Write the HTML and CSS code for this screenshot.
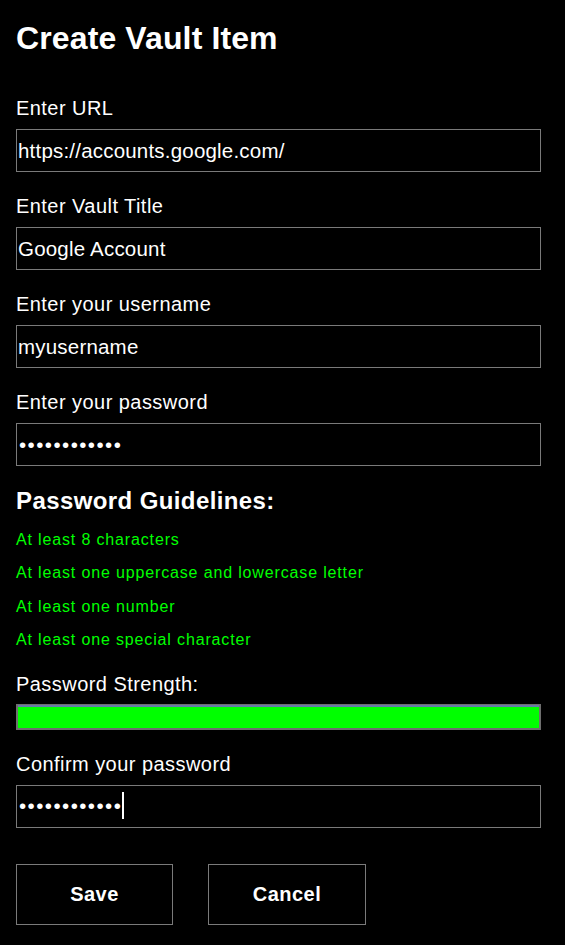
FILE: index.html
```html
<!DOCTYPE html>
<html lang="en">
<head>
<meta charset="utf-8">
<title>Create Vault Item</title>
<link rel="stylesheet" href="styles.css">
</head>
<body>
<main class="page">
  <h1 class="title">Create Vault Item</h1>
  <form class="form">
    <div class="field">
      <label class="label" for="url">Enter URL</label>
      <input class="input" id="url" type="text" value="https://accounts.google.com/">
    </div>
    <div class="field">
      <label class="label" for="title">Enter Vault Title</label>
      <input class="input" id="title" type="text" value="Google Account">
    </div>
    <div class="field">
      <label class="label" for="user">Enter your username</label>
      <input class="input" id="user" type="text" value="myusername">
    </div>
    <div class="field">
      <label class="label" for="pass">Enter your password</label>
      <input class="input input-pass" id="pass" type="password" value="Password123!">
    </div>
    <section class="guidelines">
      <h2 class="guidelines-title">Password Guidelines:</h2>
      <ul class="rules">
        <li class="rule">At least 8 characters</li>
        <li class="rule">At least one uppercase and lowercase letter</li>
        <li class="rule">At least one number</li>
        <li class="rule">At least one special character</li>
      </ul>
    </section>
    <div class="field strength">
      <span class="label">Password Strength:</span>
      <div class="meter"><div class="meter-fill" style="width: 100%"></div></div>
    </div>
    <div class="field">
      <label class="label" for="confirm">Confirm your password</label>
      <div class="input-wrap">
        <input class="input input-pass" id="confirm" type="password" value="Password123!">
        <span class="caret"></span>
      </div>
    </div>
    <div class="actions">
      <button class="btn" type="button">Save</button>
      <button class="btn btn-cancel" type="button">Cancel</button>
    </div>
  </form>
</main>
</body>
</html>
```
FILE: styles.css
```css
html, body {
  margin: 0;
  padding: 0;
  background: #000;
}
body {
  color: #fff;
  font-family: "Liberation Sans", Arial, sans-serif;
}
.page {
  padding: 20px 0 0 16px;
  width: 525px;
}
.title {
  margin: 0;
  font-size: 32px;
  line-height: 37px;
  font-weight: bold;
  letter-spacing: 0.12px;
}
.form {
  display: flex;
  flex-direction: column;
  margin-top: 39px;
}
.field {
  display: flex;
  flex-direction: column;
  margin-bottom: 22px;
}
.label {
  font-size: 20px;
  line-height: 24px;
  letter-spacing: 0.45px;
  margin-bottom: 9px;
}
.input {
  box-sizing: border-box;
  width: 525px;
  height: 43px;
  margin: 0;
  padding: 1px 2px 1px 1px;
  background: #000;
  color: #fff;
  border: 1px solid #7a7a7a;
  border-radius: 0;
  font-family: "Liberation Sans", Arial, sans-serif;
  font-size: 20.5px;
  letter-spacing: 0.2px;
  outline: none;
  caret-color: #fff;
}
.input-pass {
  letter-spacing: 1.43px;
  padding-left: 2px;
}
.input-wrap {
  position: relative;
  width: 525px;
  height: 43px;
}
.caret {
  position: absolute;
  left: 106px;
  top: 7px;
  width: 2px;
  height: 27px;
  background: #fff;
}
.guidelines {
  margin-top: -1px;
}
.guidelines-title {
  margin: 0;
  font-size: 24px;
  line-height: 28px;
  font-weight: bold;
  letter-spacing: 0.4px;
}
.rules {
  list-style: none;
  margin: 16px 0 0;
  padding: 0;
  display: flex;
  flex-direction: column;
  gap: 15.33px;
}
.rule {
  color: #00ff00;
  font-size: 16px;
  line-height: 18px;
  letter-spacing: 0.85px;
}
.strength {
  margin-top: 23px;
}
.strength .label {
  margin-bottom: 8px;
}
.meter {
  box-sizing: border-box;
  height: 26px;
  width: 525px;
  border: 2px solid #6e6e6e;
  border-top-width: 1px;
  background: #000;
}
.meter-fill {
  height: 100%;
  background: #00ff00;
  box-shadow: inset 0 2px 0 #6878a6;
}
.actions {
  display: flex;
  gap: 35px;
  margin-top: 14px;
}
.btn {
  box-sizing: border-box;
  width: 157px;
  height: 61px;
  background: #000;
  color: #fff;
  border: 1px solid #7a7a7a;
  border-radius: 0;
  font-family: "Liberation Sans", Arial, sans-serif;
  font-size: 20px;
  font-weight: bold;
  letter-spacing: 0.5px;
  padding: 0;
}
.btn-cancel {
  width: 158px;
}
```
